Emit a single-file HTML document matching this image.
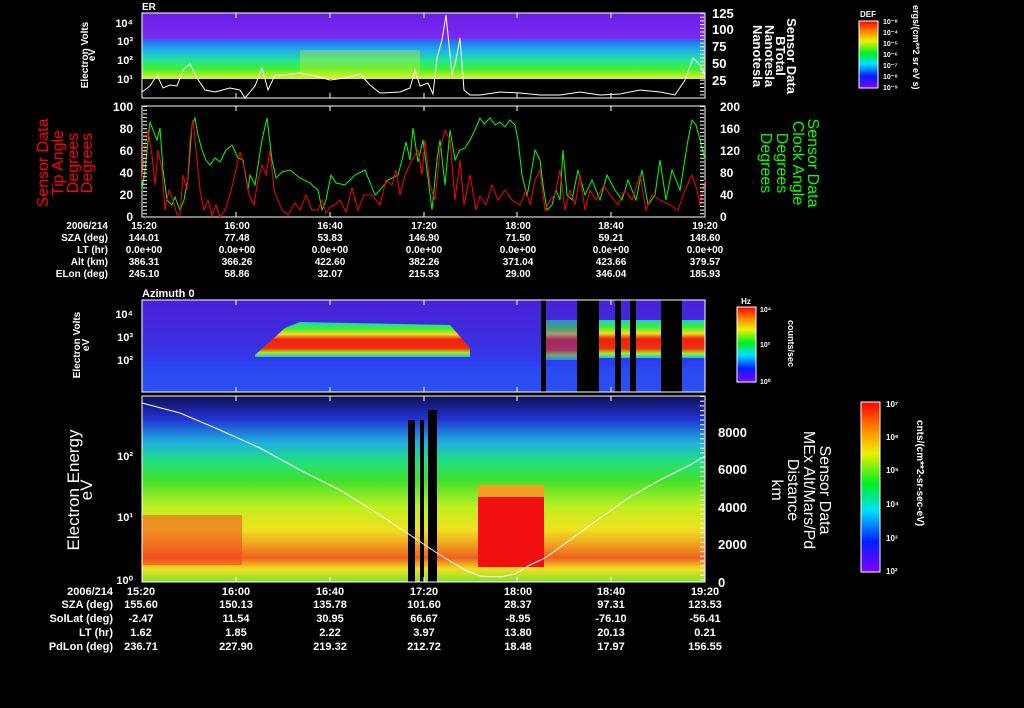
<!DOCTYPE html>
<html><head><meta charset="utf-8"><style>
html,body{margin:0;padding:0;background:#000;width:1024px;height:708px;overflow:hidden}
svg{display:block}
text{font-family:"Liberation Sans",sans-serif;font-weight:bold;fill:#fff}
</style></head><body>
<svg width="1024" height="708" viewBox="0 0 1024 708" xmlns="http://www.w3.org/2000/svg">
<defs>
<linearGradient id="p1" x1="0" y1="0" x2="0" y2="1">
<stop offset="0" stop-color="#6a1ee8"/><stop offset="0.38" stop-color="#7a2af0"/><stop offset="0.42" stop-color="#2a6cf0"/><stop offset="0.55" stop-color="#20a8f0"/><stop offset="0.7" stop-color="#20e0a0"/><stop offset="0.85" stop-color="#40f030"/><stop offset="1" stop-color="#e8f020"/>
</linearGradient>
<linearGradient id="p3" x1="0" y1="0" x2="0" y2="1">
<stop offset="0" stop-color="#4a20d8"/><stop offset="0.5" stop-color="#3a30e0"/><stop offset="0.7" stop-color="#2a40f0"/><stop offset="1" stop-color="#3050f0"/>
</linearGradient>
<linearGradient id="band" x1="0" y1="0" x2="0" y2="1">
<stop offset="0" stop-color="#20d0c0"/><stop offset="0.2" stop-color="#40f030"/><stop offset="0.35" stop-color="#f0e020"/><stop offset="0.5" stop-color="#f02010"/><stop offset="0.75" stop-color="#f03010"/><stop offset="0.88" stop-color="#a0f020"/><stop offset="1" stop-color="#20c0e0"/>
</linearGradient>
<linearGradient id="p4" x1="0" y1="0" x2="0" y2="1">
<stop offset="0" stop-color="#101050"/><stop offset="0.12" stop-color="#2030d0"/><stop offset="0.25" stop-color="#20b0e0"/><stop offset="0.35" stop-color="#20e080"/><stop offset="0.45" stop-color="#40e030"/><stop offset="0.6" stop-color="#c0f020"/><stop offset="0.72" stop-color="#f0e020"/><stop offset="0.8" stop-color="#f0a020"/><stop offset="0.87" stop-color="#f06020"/><stop offset="0.93" stop-color="#f0e020"/><stop offset="1" stop-color="#80e030"/>
</linearGradient>
<linearGradient id="cb" x1="0" y1="1" x2="0" y2="0">
<stop offset="0" stop-color="#8000ff"/><stop offset="0.18" stop-color="#0020ff"/><stop offset="0.36" stop-color="#00e0ff"/><stop offset="0.52" stop-color="#00f020"/><stop offset="0.7" stop-color="#f0f000"/><stop offset="0.85" stop-color="#ff8000"/><stop offset="1" stop-color="#ff0000"/>
</linearGradient>
</defs>

<!-- Panel 1 -->
<rect x="142" y="13" width="563" height="66" fill="url(#p1)"/>
<rect x="300" y="50" width="120" height="29" fill="#e0f020" opacity="0.35"/>
<rect x="142" y="79" width="563" height="19" fill="#000"/>
<polyline fill="none" stroke="#fff" stroke-width="1" points="142,92 150,86 157,75 163,88 170,85 177,86 183,70 190,64 197,78 205,90 215,92 230,88 240,90 245,98 255,86 262,68 268,90 275,75 285,75 300,73 315,76 330,80 345,78 360,74 370,85 380,93 400,92 410,88 415,70 420,86 428,83 433,94 437,58 442,40 446,15 452,75 456,60 460,38 464,90 470,95 480,95 500,92 520,93 540,95 560,95 580,92 600,95 620,94 640,90 660,92 675,95 685,80 693,58 700,65 705,75"/>
<rect x="142" y="13" width="563" height="85" fill="none" stroke="#fff" stroke-width="1"/>
<text x="142" y="10" font-size="10">ER</text>
<g font-size="11" text-anchor="end"><text x="133" y="27">10⁴</text><text x="133" y="45">10³</text><text x="133" y="64">10²</text><text x="133" y="83">10¹</text></g>
<g font-size="13"><text x="712" y="18">125</text><text x="712" y="34">100</text><text x="712" y="51">75</text><text x="712" y="68">50</text><text x="712" y="85">25</text></g>

<!-- Panel 2 -->
<rect x="142" y="106" width="563" height="111" fill="none" stroke="#fff"/>
<g font-size="12" text-anchor="end"><text x="133" y="111">100</text><text x="133" y="133">80</text><text x="133" y="155">60</text><text x="133" y="177">40</text><text x="133" y="199">20</text><text x="133" y="221">0</text></g>
<g font-size="12"><text x="720" y="111">200</text><text x="720" y="133">160</text><text x="720" y="155">120</text><text x="720" y="177">80</text><text x="720" y="199">40</text><text x="720" y="221">0</text></g>
<polyline fill="none" stroke="#0f0" stroke-width="1" points="142,190 145,170 150,122 153,130 157,140 160,128 163,170 167,200 172,205 175,197 180,210 184,200 188,178 192,125 195,118 198,135 202,150 206,160 210,165 215,158 220,162 226,150 232,145 238,158 243,160 248,190 250,175 255,185 262,140 267,118 272,160 276,178 282,172 290,170 300,178 310,183 318,190 322,210 326,200 331,175 336,183 345,185 355,175 365,170 369,180 375,195 380,190 388,180 398,175 402,160 406,142 410,160 413,128 418,162 423,140 428,178 432,210 437,160 440,140 445,185 450,130 455,160 460,150 465,148 470,140 475,130 480,118 484,124 490,118 495,125 500,122 505,127 510,120 515,125 518,140 522,175 527,196 530,180 535,150 540,160 543,185 547,210 552,205 556,190 560,200 563,150 567,195 572,200 578,170 585,195 592,180 600,200 607,175 615,190 622,200 628,180 636,200 642,170 648,205 655,195 660,160 666,200 672,170 680,190 688,140 692,120 696,125 700,140 705,160"/>
<polyline fill="none" stroke="#f00" stroke-width="1" points="142,180 145,145 148,130 152,155 155,185 158,150 162,170 165,210 169,190 173,200 177,215 180,215 183,175 187,190 190,140 193,120 196,150 200,190 204,210 208,200 212,216 216,205 220,217 225,210 230,195 236,170 240,152 245,170 249,195 254,205 258,180 262,165 266,175 270,150 274,190 278,200 282,210 288,215 295,203 300,210 306,195 312,210 318,210 322,200 326,213 330,207 335,205 340,200 346,212 352,188 358,210 364,195 372,195 380,205 386,180 392,185 396,170 400,195 405,175 412,160 418,150 422,175 425,140 430,185 435,200 440,150 445,130 450,140 455,200 460,160 464,205 470,175 476,210 480,196 486,205 492,185 498,200 505,190 512,200 520,205 526,190 530,205 535,180 540,170 545,210 550,200 555,195 560,170 565,210 570,190 575,205 580,175 585,210 590,190 596,200 604,185 610,195 618,205 625,190 632,200 640,175 646,210 652,195 660,200 670,205 678,210 685,190 692,175 697,190 700,205 705,180"/>

<!-- time labels panel 2 -->
<g font-size="10" text-anchor="end"><text x="108" y="229">2006/214</text><text x="108" y="241">SZA (deg)</text><text x="108" y="253">LT (hr)</text><text x="108" y="265">Alt (km)</text><text x="108" y="277">ELon (deg)</text></g>
<g font-size="10" text-anchor="middle">
<text x="144" y="229">15:20</text><text x="144" y="241">144.01</text><text x="144" y="253">0.0e+00</text><text x="144" y="265">386.31</text><text x="144" y="277">245.10</text>
<text x="237" y="229">16:00</text><text x="237" y="241">77.48</text><text x="237" y="253">0.0e+00</text><text x="237" y="265">366.26</text><text x="237" y="277">58.86</text>
<text x="330" y="229">16:40</text><text x="330" y="241">53.83</text><text x="330" y="253">0.0e+00</text><text x="330" y="265">422.60</text><text x="330" y="277">32.07</text>
<text x="424" y="229">17:20</text><text x="424" y="241">146.90</text><text x="424" y="253">0.0e+00</text><text x="424" y="265">382.26</text><text x="424" y="277">215.53</text>
<text x="518" y="229">18:00</text><text x="518" y="241">71.50</text><text x="518" y="253">0.0e+00</text><text x="518" y="265">371.04</text><text x="518" y="277">29.00</text>
<text x="611" y="229">18:40</text><text x="611" y="241">59.21</text><text x="611" y="253">0.0e+00</text><text x="611" y="265">423.66</text><text x="611" y="277">346.04</text>
<text x="705" y="229">19:20</text><text x="705" y="241">148.60</text><text x="705" y="253">0.0e+00</text><text x="705" y="265">379.57</text><text x="705" y="277">185.93</text>
</g>

<!-- Panel 3 -->
<text x="142" y="297" font-size="11">Azimuth 0</text>
<rect x="142" y="300" width="563" height="92" fill="url(#p3)"/>
<rect x="142" y="367" width="563" height="25" fill="#2a50f0" opacity="0.6"/>
<polygon points="255,355 285,328 300,322 450,325 470,348 470,357 255,357" fill="url(#band)"/>
<rect x="546" y="320" width="31" height="40" fill="url(#band)" opacity="0.6"/>
<rect x="599" y="320" width="62" height="38" fill="url(#band)"/>
<rect x="682" y="320" width="23" height="38" fill="url(#band)"/>
<rect x="541" y="300" width="5" height="92" fill="#000"/>
<rect x="577" y="300" width="22" height="92" fill="#000"/>
<rect x="615" y="300" width="6" height="92" fill="#000"/>
<rect x="630" y="300" width="6" height="92" fill="#000"/>
<rect x="661" y="300" width="21" height="92" fill="#000"/>
<rect x="142" y="300" width="563" height="92" fill="none" stroke="#fff"/>
<g font-size="11" text-anchor="end"><text x="133" y="318">10⁴</text><text x="133" y="341">10³</text><text x="133" y="364">10²</text></g>

<!-- Panel 4 -->
<rect x="142" y="396" width="563" height="186" fill="url(#p4)"/>
<rect x="142" y="515" width="100" height="50" fill="#f04020" opacity="0.5"/>
<rect x="478" y="495" width="66" height="72" fill="#f01010"/>
<rect x="478" y="485" width="66" height="12" fill="#f0a020"/>
<rect x="408" y="420" width="7" height="162" fill="#000"/>
<rect x="420" y="420" width="4" height="162" fill="#000"/>
<rect x="428" y="410" width="9" height="172" fill="#000"/>
<polyline fill="none" stroke="#fff" stroke-width="1" points="142,403 180,413 220,430 260,448 300,470 340,490 380,515 410,535 440,555 465,570 480,576 500,577 515,574 530,565 545,558 570,540 600,518 630,497 660,480 690,465 705,456"/>
<rect x="142" y="396" width="563" height="186" fill="none" stroke="#fff"/>
<g font-size="11" text-anchor="end"><text x="133" y="460">10²</text><text x="133" y="521">10¹</text><text x="133" y="584">10⁰</text></g>
<g font-size="13"><text x="718" y="437">8000</text><text x="718" y="474">6000</text><text x="718" y="512">4000</text><text x="718" y="549">2000</text><text x="718" y="587">0</text></g>

<!-- ticks -->
<g stroke="#fff" stroke-width="1">
<path d="M236,13v5M330,13v5M424,13v5M517,13v5M611,13v5M236,98v-5M330,98v-5M424,98v-5M517,98v-5M611,98v-5"/>
<path d="M236,106v5M330,106v5M424,106v5M517,106v5M611,106v5M236,217v-5M330,217v-5M424,217v-5M517,217v-5M611,217v-5"/>
<path d="M236,300v5M330,300v5M424,300v5M517,300v5M611,300v5M236,392v-5M330,392v-5M424,392v-5M517,392v-5M611,392v-5"/>
<path d="M236,396v5M330,396v5M424,396v5M517,396v5M611,396v5M236,582v-5M330,582v-5M424,582v-5M517,582v-5M611,582v-5"/>
</g>
<line x1="145" y1="106" x2="145" y2="217" stroke="#fff" stroke-width="4" stroke-dasharray="1 2.7"/>
<line x1="702" y1="106" x2="702" y2="217" stroke="#fff" stroke-width="4" stroke-dasharray="1 2.7"/>
<line x1="702" y1="13" x2="702" y2="98" stroke="#fff" stroke-width="4" stroke-dasharray="1 2.7"/>
<line x1="702" y1="396" x2="702" y2="582" stroke="#fff" stroke-width="4" stroke-dasharray="1 3.7"/>

<!-- bottom rows -->
<g font-size="11" text-anchor="end"><text x="113" y="595">2006/214</text><text x="113" y="608">SZA (deg)</text><text x="113" y="622">SolLat (deg)</text><text x="113" y="636">LT (hr)</text><text x="113" y="650">PdLon (deg)</text></g>
<g font-size="11" text-anchor="middle">
<text x="141" y="595">15:20</text><text x="141" y="608">155.60</text><text x="141" y="622">-2.47</text><text x="141" y="636">1.62</text><text x="141" y="650">236.71</text>
<text x="236" y="595">16:00</text><text x="236" y="608">150.13</text><text x="236" y="622">11.54</text><text x="236" y="636">1.85</text><text x="236" y="650">227.90</text>
<text x="330" y="595">16:40</text><text x="330" y="608">135.78</text><text x="330" y="622">30.95</text><text x="330" y="636">2.22</text><text x="330" y="650">219.32</text>
<text x="424" y="595">17:20</text><text x="424" y="608">101.60</text><text x="424" y="622">66.67</text><text x="424" y="636">3.97</text><text x="424" y="650">212.72</text>
<text x="518" y="595">18:00</text><text x="518" y="608">28.37</text><text x="518" y="622">-8.95</text><text x="518" y="636">13.80</text><text x="518" y="650">18.48</text>
<text x="611" y="595">18:40</text><text x="611" y="608">97.31</text><text x="611" y="622">-76.10</text><text x="611" y="636">20.13</text><text x="611" y="650">17.97</text>
<text x="705" y="595">19:20</text><text x="705" y="608">123.53</text><text x="705" y="622">-56.41</text><text x="705" y="636">0.21</text><text x="705" y="650">156.55</text>
</g>

<!-- Rotated axis labels -->
<g font-size="10" text-anchor="middle">
<text transform="translate(88,55) rotate(-90)">Electron Volts</text>
<text transform="translate(95,55) rotate(-90)">eV</text>
<text transform="translate(80,345) rotate(-90)">Electron Volts</text>
<text transform="translate(89,345) rotate(-90)">eV</text>
</g>
<g font-size="17" text-anchor="middle">
<text transform="translate(79,490) rotate(-90)" style="font-weight:normal">Electron Energy</text>
<text transform="translate(92,490) rotate(-90)" style="font-weight:normal">eV</text>
</g>
<g font-size="16" text-anchor="middle">
<text transform="translate(48,163) rotate(-90)" style="fill:#f00;font-weight:normal">Sensor Data</text>
<text transform="translate(63,163) rotate(-90)" style="fill:#f00;font-weight:normal">Tip Angle</text>
<text transform="translate(78,163) rotate(-90)" style="fill:#f00;font-weight:normal">Degrees</text>
<text transform="translate(92,163) rotate(-90)" style="fill:#f00;font-weight:normal">Degrees</text>
</g>
<g font-size="16" text-anchor="middle">
<text transform="translate(808,163) rotate(90)" style="fill:#0f0;font-weight:normal">Sensor Data</text>
<text transform="translate(793,163) rotate(90)" style="fill:#0f0;font-weight:normal">Clock Angle</text>
<text transform="translate(777,163) rotate(90)" style="fill:#0f0;font-weight:normal">Degrees</text>
<text transform="translate(761,163) rotate(90)" style="fill:#0f0;font-weight:normal">Degrees</text>
</g>
<g font-size="13" text-anchor="middle">
<text transform="translate(787,56) rotate(90)">Sensor Data</text>
<text transform="translate(776,56) rotate(90)">BTotal</text>
<text transform="translate(765,56) rotate(90)">Nanotesla</text>
<text transform="translate(753,56) rotate(90)">Nanotesla</text>
</g>
<g font-size="16" text-anchor="middle">
<text transform="translate(820,490) rotate(90)" style="font-weight:normal">Sensor Data</text>
<text transform="translate(804,490) rotate(90)" style="font-weight:normal">MEx Alt/Mars/Pd</text>
<text transform="translate(788,490) rotate(90)" style="font-weight:normal">Distance</text>
<text transform="translate(772,490) rotate(90)" style="font-weight:normal">km</text>
</g>

<!-- Colorbars -->
<text x="868" y="17" font-size="8" text-anchor="middle">DEF</text>
<rect x="859" y="21" width="19" height="67" fill="url(#cb)" stroke="#fff"/>
<g font-size="7"><text x="883" y="24">10⁻⁸</text><text x="883" y="35">10⁻⁴</text><text x="883" y="46">10⁻⁵</text><text x="883" y="57">10⁻⁶</text><text x="883" y="68">10⁻⁷</text><text x="883" y="79">10⁻⁸</text><text x="883" y="90">10⁻⁹</text></g>
<text transform="translate(913,5) rotate(90)" font-size="9">ergs/(cm**2 sr eV s)</text>

<text x="746" y="304" font-size="8" text-anchor="middle">Hz</text>
<rect x="737" y="307" width="19" height="75" fill="url(#cb)" stroke="#fff"/>
<g font-size="7"><text x="760" y="312">10⁴</text><text x="760" y="347">10²</text><text x="760" y="384">10⁰</text></g>
<text transform="translate(788,320) rotate(90)" font-size="9">counts/sec</text>

<rect x="861" y="402" width="19" height="170" fill="url(#cb)" stroke="#fff"/>
<g font-size="8"><text x="886" y="407">10⁷</text><text x="886" y="440">10⁶</text><text x="886" y="473">10⁵</text><text x="886" y="507">10⁴</text><text x="886" y="541">10³</text><text x="886" y="574">10²</text></g>
<text transform="translate(917,420) rotate(90)" font-size="10">cnts/(cm**2-sr-sec-eV)</text>
</svg>
</body></html>
